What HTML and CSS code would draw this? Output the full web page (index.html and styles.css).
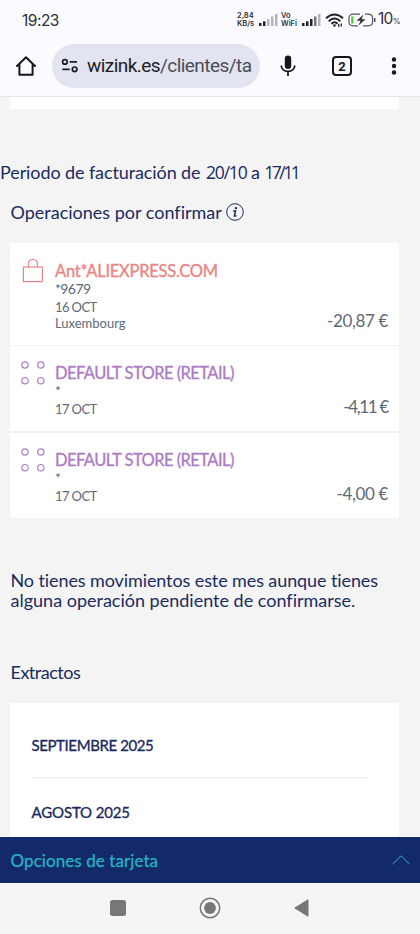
FILE: index.html
```html
<!DOCTYPE html>
<html lang="es">
<head>
<meta charset="utf-8">
<title>Movimientos</title>
<link rel="stylesheet" href="styles.css">
</head>
<body>
<div class="screen">
  <header class="status">
    <span class="clock">19:23</span>
    <div class="indicators">
      <div class="tiny speed"><span>2,84</span><span>KB/s</span></div>
      <svg class="sig" width="20" height="14" viewBox="0 0 20 14"><g fill="#222328"><rect x="1" y="10" width="2.5" height="3"/><rect x="5" y="8.3" width="2.5" height="4.7"/></g><g fill="#b4b4bc"><rect x="9" y="6" width="2.5" height="7"/><rect x="13" y="3.5" width="2.5" height="9.5"/><rect x="17" y="1" width="2.5" height="12"/></g></svg>
      <div class="tiny wifi-call"><span>Vo</span><span>WiFi</span></div>
      <svg class="sig2" width="20" height="14" viewBox="0 0 20 14"><g fill="#222328"><rect x="1" y="10" width="2.5" height="3"/><rect x="5" y="8.3" width="2.5" height="4.7"/><rect x="9" y="6" width="2.5" height="7"/></g><rect x="13" y="3.5" width="2.5" height="9.5" fill="#77777e"/><rect x="17" y="1" width="2.5" height="12" fill="#b4b4bc"/></svg>
      <svg class="wifi" width="19" height="15" viewBox="0 0 19 15" fill="none" stroke="#222328" stroke-width="1.9"><path d="M1 5.2Q9.500-2.200 18 5.200M3.700 8.200Q9.500 3 15.300 8.200M6.300 10.800Q9.500 7.800 12.700 10.800"/><path d="M7.600 11.500L9.500 14.200L11.400 11.500Z" fill="#222328" stroke="none"/><path d="M13.800 11v3M16.300 10.500v3" stroke-width="1.300"/></svg>
      <svg class="battery" width="28" height="14" viewBox="0 0 28 14" fill="none"><path d="M12 1.200H5.500Q1 1.200 1 5V9Q1 12.800 5.500 12.800H10M17 1.200H20Q24.500 1.200 24.500 5V9Q24.500 12.800 20 12.800H15" stroke="#55565b" stroke-width="1.200"/><path d="M26.700 5v4" stroke="#44454a" stroke-width="1.500"/><path d="M4.300 3.500v7" stroke="#47d12c" stroke-width="2.200"/><path d="M15.500 1.500L8.500 7.800h4L10.500 12.500L17.500 6.200h-4Z" fill="#303136"/></svg>
      <span class="pct">10<small>%</small></span>
    </div>
  </header>
  <nav class="toolbar">
    <svg class="home" width="20" height="20" viewBox="0 0 20 20" fill="none" stroke="#16171c" stroke-width="2" stroke-linejoin="round" stroke-linecap="round"><path d="M1 10L10 1.200L19 10M3.400 8V18.800H16.600V8"/></svg>
    <div class="address">
      <svg width="18" height="16" viewBox="0 0 18 16" fill="none" stroke="#1c1d22" stroke-width="1.700"><circle cx="3.900" cy="3.900" r="2.300"/><path d="M8.700 3.900H16M1.300 11.300H8.700"/><circle cx="13.600" cy="11.300" r="2.300"/></svg>
      <span class="url"><b>wizink.es</b>/clientes/ta</span>
    </div>
    <svg class="mic" width="16" height="22" viewBox="0 0 16 22" fill="none"><rect x="4.800" y=".5" width="6.400" height="13.500" rx="3.200" fill="#16171c"/><path d="M1.200 10.500Q1.800 16.300 8 16.300Q14.200 16.300 14.800 10.500M8 16.300V21" stroke="#16171c" stroke-width="1.800"/></svg>
    <span class="tabs">2</span>
    <svg class="dots" width="6" height="18" viewBox="0 0 6 18" fill="#16171c"><circle cx="3" cy="2.500" r="2.200"/><circle cx="3" cy="9" r="2.200"/><circle cx="3" cy="15.500" r="2.200"/></svg>
  </nav>
  <main class="page">
    <div class="strip"></div>
    <h2 class="period">Periodo de facturación de <span class="from">20/10</span> a <span class="to">17/11</span></h2>
    <h3 class="pending"><span>Operaciones por confirmar</span>
      <svg width="18" height="18" viewBox="0 0 18 18" fill="none" stroke="#1b2b60"><circle cx="9" cy="9" r="8.300" stroke-width="1"/><circle cx="9.900" cy="5.100" r="1.200" fill="#1b2b60" stroke="none"/><path d="M7.200 8.100H9.500L8.400 13.100H10.500" stroke-width="1.500"/></svg>
    </h3>
    <section class="card">
      <article class="op first">
        <svg class="bag" width="24" height="26" viewBox="0 0 24 26" fill="none" stroke="#ea8585" stroke-width="1.200"><rect x="2.400" y="9" width="19" height="14.600"/><path d="M7.400 9V6Q7.400 1.500 11.900 1.500Q16.400 1.500 16.400 6V9"/></svg>
        <div class="info"><strong class="coral">Ant*ALIEXPRESS.COM</strong><span class="d1">*9679</span><span class="d2">16 OCT</span><span class="d3">Luxembourg</span></div>
        <span class="amount">-20,87 €</span>
      </article>
      <article class="op">
        <svg class="four" width="24" height="26" viewBox="0 0 24 26" fill="none" stroke="#ad7cc4" stroke-width="1.200"><circle cx="4" cy="5" r="3.200"/><circle cx="19.800" cy="5" r="3.200"/><circle cx="4" cy="20.700" r="3.200"/><circle cx="19.800" cy="20.700" r="3.200"/></svg>
        <div class="info"><strong class="violet">DEFAULT STORE (RETAIL)</strong><span class="d1">*</span><span class="d2">17 OCT</span></div>
        <span class="amount ones">-4,11 €</span>
      </article>
      <article class="op last">
        <svg class="four" width="24" height="26" viewBox="0 0 24 26" fill="none" stroke="#ad7cc4" stroke-width="1.200"><circle cx="4" cy="5" r="3.200"/><circle cx="19.800" cy="5" r="3.200"/><circle cx="4" cy="20.700" r="3.200"/><circle cx="19.800" cy="20.700" r="3.200"/></svg>
        <div class="info"><strong class="violet">DEFAULT STORE (RETAIL)</strong><span class="d1">*</span><span class="d2">17 OCT</span></div>
        <span class="amount">-4,00 €</span>
      </article>
    </section>
    <p class="note"><span class="n1">No tienes movimientos este mes aunque tienes</span><br><span class="n2">alguna operación pendiente de confirmarse.</span></p>
    <h3 class="extracts">Extractos</h3>
    <section class="months">
      <div class="month m1">SEPTIEMBRE 2025</div>
      <div class="month m2">AGOSTO 2025</div>
    </section>
  </main>
  <div class="options"><span>Opciones de tarjeta</span>
    <svg width="18" height="10" viewBox="0 0 18 10" fill="none" stroke="#23b5c5" stroke-width="1"><path d="M.5 9.200L9 .8L17.500 9.200"/></svg>
  </div>
  <footer class="sysnav">
    <svg width="16" height="16" viewBox="0 0 16 16"><rect width="16" height="16" rx="2.500" fill="#777"/></svg>
    <svg width="22" height="22" viewBox="0 0 22 22"><circle cx="11" cy="11" r="9.700" fill="none" stroke="#777" stroke-width="1.500"/><circle cx="11" cy="11" r="5.900" fill="#777"/></svg>
    <svg width="15" height="18" viewBox="0 0 15 18"><path d="M14 .8V17.200L.8 9Z" fill="#777" stroke="#777" stroke-linejoin="round"/></svg>
  </footer>
</div>
</body>
</html>
```
FILE: styles.css
```css
* { box-sizing: border-box; }
body { margin: 0; font-family: Lato, "Open Sans", sans-serif; font-variant-ligatures: none; color: #1b2b60; }
h2, h3, p { margin: 0; font-weight: 400; }
svg { display: block; flex: none; }
.screen { width: 420px; height: 934px; display: flex; flex-direction: column; overflow: hidden; background: #f4f4f4; }

.status { height: 40px; flex: none; background: #fbfaff; display: flex; justify-content: space-between; padding: 0 19px 0 22px; color: #303136; }
.clock { font: 400 15.5px/41px Inter, sans-serif; letter-spacing: -0.5px; }
.indicators { display: flex; align-items: center; }
.tiny { display: flex; flex-direction: column; font: 600 7.5px/8px Inter, sans-serif; white-space: nowrap; }
.tiny span { height: 8px; }
.speed { width: 21px; }
.wifi-call { width: 18px; margin-left: 3px; }
.sig2 { margin-left: 2px; }
.wifi { margin-left: 4px; }
.battery { margin-left: 4px; }
.pct { font: 400 15.500px/42px Inter, sans-serif; margin-left: 2px; white-space: nowrap; width: 23px; letter-spacing: -0.7px; }
.pct small { font-size: 8px; }

.toolbar { height: 57px; flex: none; background: #fbfaff; border-bottom: 1px solid #e5e4ea; display: flex; align-items: center; padding: 0 23px 5px 16px; }
.address { width: 208px; height: 44px; margin-left: 16px; border-radius: 22px; background: #e2e4f2; display: flex; align-items: center; padding-left: 9px; }
.url { margin-left: 8px; font: 400 19px/45px Roboto, sans-serif; letter-spacing: -0.55px; color: #4b4d57; white-space: nowrap; }
.url b { font-weight: 400; color: #1c1d22; }
.mic { margin-left: 20px; }
.tabs { width: 20px; height: 20px; margin-left: 36px; border: 2px solid #16171c; border-radius: 4px; font: 700 13px/17px Roboto, sans-serif; color: #16171c; text-align: center; }
.dots { margin-left: auto; }

.page { height: 740px; flex: none; overflow: hidden; }
.strip { height: 12px; margin: 0 21px 0 10px; background: #fff; }
.period { margin-top: 51px; font-size: 18px; line-height: 24px; letter-spacing: -0.1px; white-space: nowrap; }
.from { font-family: "Open Sans", sans-serif; font-size: 17.500px; letter-spacing: -1.2px; margin-left: 1px; }
.to { font-family: "Open Sans", sans-serif; font-size: 17.500px; letter-spacing: -2.500px; }
.pending { margin: 16px 0 0 10.5px; font-size: 18px; line-height: 24px; display: flex; align-items: center; gap: 4px; white-space: nowrap; }
.card { margin: 19px 21px 0 10px; background: #fff; }
.op { height: 87px; display: flex; padding: 14px 11px 0 10.500px; border-bottom: 2px solid #f1f1f2; }
.op.first { height: 103px; padding-top: 15px; border-bottom-width: 1px; }
.op.last { height: 85px; border: 0; }
.info { display: flex; flex-direction: column; align-items: flex-start; margin: 3px 0 0 10.500px; color: #606977; flex: 1; white-space: nowrap; }
.info strong { font-size: 16.500px; font-weight: 400; -webkit-text-stroke: 0.35px currentColor; line-height: 20px; }
.coral { color: #ea8585; letter-spacing: -0.25px; }
.violet { color: #ad7cc4; letter-spacing: -0.55px; }
.info span { font-size: 13px; line-height: 16.500px; }
.info .d1 { font-size: 14px; letter-spacing: -0.6px; }
.info .d2 { letter-spacing: -0.6px; padding-top: 1px; }
.info .d3 { line-height: 16px; }
.amount { align-self: flex-end; font-size: 17px; line-height: 20px; color: #606977; letter-spacing: -0.35px; margin-bottom: 14px; white-space: nowrap; }
.ones { letter-spacing: -1.3px; }
.note { margin: 52px 0 0 10.500px; font-size: 18px; line-height: 20px; white-space: nowrap; }
.n1 { letter-spacing: -0.1px; }
.extracts { margin: 50px 0 0 10.500px; font-size: 18px; line-height: 24px; letter-spacing: -0.5px; }
.months { margin: 19px 21px 0 10px; padding: 9px 31px 0 21.500px; background: #fff; height: 140px; }
.month { height: 67px; border-bottom: 2px solid #f1f1f2; font-size: 15px; line-height: 66px; -webkit-text-stroke: 0.35px currentColor; letter-spacing: -0.4px; }
.m2 { letter-spacing: -0.15px; }

.options { height: 46px; flex: none; background: #142967; color: #23b5c5; font-size: 17px; letter-spacing: 0.08px; -webkit-text-stroke: 0.25px currentColor; display: flex; align-items: center; justify-content: space-between; padding: 0 10px 0 10.500px; }
.sysnav { height: 51px; flex: none; background: #f5f4f6; display: flex; align-items: center; justify-content: center; gap: 73px; padding: 0 2px 2px 0; }
```
